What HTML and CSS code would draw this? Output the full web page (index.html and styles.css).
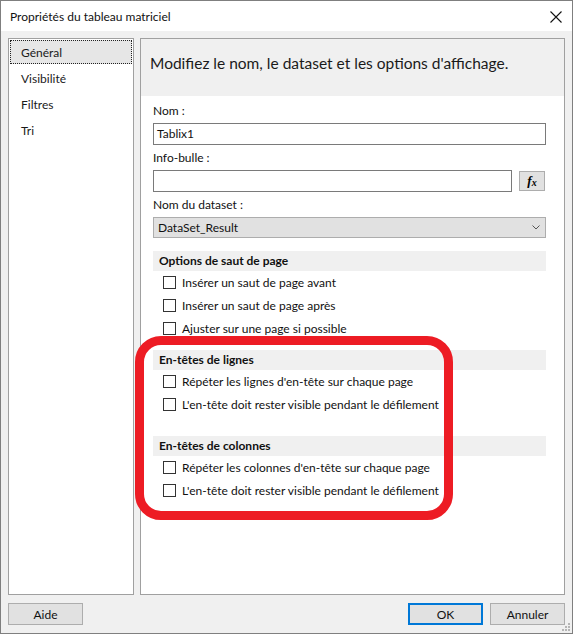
FILE: index.html
```html
<!DOCTYPE html>
<html lang="fr">
<head>
<meta charset="utf-8">
<title>Propriétés du tableau matriciel</title>
<link rel="stylesheet" href="styles.css">
</head>
<body>
<div class="window">
  <div class="titlebar">
    <span class="title">Propriétés du tableau matriciel</span>
    <svg class="close" width="12" height="12" viewBox="0 0 12 12"><path d="M0.5 0.5 L11.5 11.5 M11.5 0.5 L0.5 11.5" stroke="#111" stroke-width="1.1" fill="none"/></svg>
  </div>
  <div class="body">
    <div class="panels">
      <ul class="nav">
        <li class="nav-item selected">Général</li>
        <li class="nav-item">Visibilité</li>
        <li class="nav-item">Filtres</li>
        <li class="nav-item">Tri</li>
      </ul>
      <div class="page">
        <div class="page-header">Modifiez le nom, le dataset et les options d'affichage.</div>
        <div class="form">
          <div class="lbl">Nom :</div>
          <div class="input">Tablix1</div>
          <div class="lbl">Info-bulle :</div>
          <div class="input-row">
            <div class="input grow"></div>
            <div class="fx"><span class="fx-f">f</span><span class="fx-x">x</span></div>
          </div>
          <div class="lbl">Nom du dataset :</div>
          <div class="select">
            <span>DataSet_Result</span>
            <svg class="chev" width="8" height="5" viewBox="0 0 8 5"><path d="M0.5 0.5 L4 4 L7.5 0.5" stroke="#555" stroke-width="1" fill="none"/></svg>
          </div>

          <div class="section first">
            <div class="section-title">Options de saut de page</div>
            <div class="check"><span class="box"></span>Insérer un saut de page avant</div>
            <div class="check"><span class="box"></span>Insérer un saut de page après</div>
            <div class="check"><span class="box"></span>Ajuster sur une page si possible</div>
          </div>

          <div class="section second">
            <div class="section-title">En-têtes de lignes</div>
            <div class="check"><span class="box"></span>Répéter les lignes d'en-tête sur chaque page</div>
            <div class="check"><span class="box"></span>L'en-tête doit rester visible pendant le défilement</div>
          </div>

          <div class="section third">
            <div class="section-title">En-têtes de colonnes</div>
            <div class="check"><span class="box"></span>Répéter les colonnes d'en-tête sur chaque page</div>
            <div class="check"><span class="box"></span>L'en-tête doit rester visible pendant le défilement</div>
          </div>
        </div>
      </div>
    </div>
    <div class="footer">
      <button class="btn">Aide</button>
      <div class="btn-group">
        <button class="btn default">OK</button>
        <button class="btn">Annuler</button>
      </div>
    </div>
  </div>
  <div class="annotation"></div>
  <svg class="grip" width="8" height="8" viewBox="0 0 8 8">
    <rect x="6" y="0" width="2" height="2" fill="#b5b5b5"/>
    <rect x="3" y="3" width="2" height="2" fill="#b5b5b5"/>
    <rect x="6" y="3" width="2" height="2" fill="#b5b5b5"/>
    <rect x="0" y="6" width="2" height="2" fill="#b5b5b5"/>
    <rect x="3" y="6" width="2" height="2" fill="#b5b5b5"/>
    <rect x="6" y="6" width="2" height="2" fill="#b5b5b5"/>
  </svg>
</div>
</body>
</html>
```

FILE: styles.css
```css
* { box-sizing: border-box; }
html, body { margin: 0; padding: 0; background: #ffffff; }
body {
  font-family: Lato, "Noto Sans", sans-serif;
  font-size: 12px;
  color: #111;
}
.window {
  position: relative;
  width: 573px;
  height: 634px;
  border: 1px solid #7f7f7f;
  display: flex;
  flex-direction: column;
  background: #f0f0f0;
}
.titlebar {
  height: 30px;
  flex: none;
  background: #ffffff;
  display: flex;
  align-items: center;
  justify-content: space-between;
  padding: 0 10px 0 9px;
}
.title { font-size: 12px; color: #111; }
.close { display: block; margin-top: 1px; }
.body {
  flex: 1;
  display: flex;
  flex-direction: column;
  padding: 7px 7px 8px 7px;
  gap: 8px;
}
.panels {
  height: 557px;
  display: flex;
  gap: 6px;
}
.nav {
  list-style: none;
  margin: 0;
  width: 126px;
  flex: none;
  padding: 1px;
  background: #ffffff;
  border: 1px solid #a0a0a0;
  display: flex;
  flex-direction: column;
  gap: 2px;
}
.nav-item {
  height: 24px;
  line-height: 24px;
  padding-left: 10px;
  border: 1px solid transparent;
  color: #1a1a1a;
}
.nav-item.selected {
  background: #e6e6e6;
  border: 1px dotted #222;
}
.page {
  flex: 1;
  background: #ffffff;
  border: 1px solid #a0a0a0;
  display: flex;
  flex-direction: column;
}
.page-header {
  height: 57px;
  background: #f0f0f0;
  padding: 14px 0 0 9px;
  font-size: 15.5px;
  line-height: 20px;
  color: #1a1a1a;
}
.form {
  padding: 7px 18px 0 12px;
  display: flex;
  flex-direction: column;
}
.lbl {
  line-height: 16px;
  margin-top: 5px;
  margin-bottom: 4px;
}
.lbl:first-child { margin-top: 0; }
.input {
  height: 22px;
  border: 1px solid #7a7a7a;
  background: #fff;
  padding-left: 3px;
  line-height: 20px;
}
.input-row {
  display: flex;
  align-items: center;
  gap: 7px;
}
.grow { flex: 1; }
.fx {
  width: 26px;
  height: 20px;
  margin-right: 1px;
  background: #e1e1e1;
  border: 1px solid #adadad;
  display: flex;
  align-items: center;
  justify-content: center;
  font-family: "Liberation Serif", serif;
  font-weight: bold;
  font-style: italic;
  color: #000;
}
.fx-f { font-size: 13px; }
.fx-x { font-size: 10px; margin-top: 2px; }
.select {
  height: 21px;
  background: #e1e1e1;
  border: 1px solid #adadad;
  display: flex;
  align-items: center;
  justify-content: space-between;
  padding: 0 5px 0 4px;
}
.chev { display: block; }
.section-title {
  height: 20px;
  line-height: 20px;
  background: #f0f0f0;
  font-weight: bold;
  padding-left: 6px;
}
.section.first { margin-top: 13px; }
.section.second { margin-top: 10px; }
.section.third { margin-top: 20px; }
.check {
  height: 23px;
  display: flex;
  align-items: center;
  padding-left: 10px;
  gap: 6px;
}
.box {
  width: 13px;
  height: 13px;
  border: 1px solid #333;
  background: #fff;
  flex: none;
}
.footer {
  height: 22px;
  display: flex;
  justify-content: space-between;
}
.btn-group { display: flex; gap: 7px; }
.btn {
  width: 75px;
  height: 22px;
  margin: 0;
  padding: 0;
  background: #e1e1e1;
  border: 1px solid #adadad;
  font-family: Lato, "Noto Sans", sans-serif;
  font-size: 12px;
  color: #111;
}
.btn.default { border: 2px solid #0078d7; }
.annotation {
  position: absolute;
  left: 134px;
  top: 335px;
  width: 318px;
  height: 184px;
  border: 9px solid #ed1c24;
  border-radius: 26px;
  pointer-events: none;
}
.grip {
  position: absolute;
  right: 2px;
  bottom: 2px;
}
```
